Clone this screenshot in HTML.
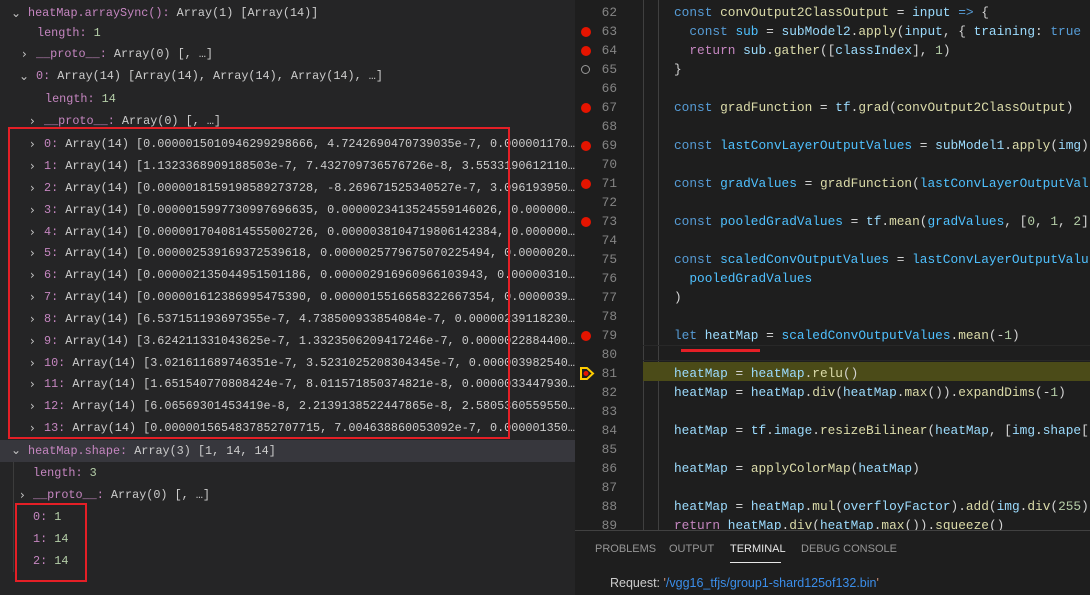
<!DOCTYPE html>
<html><head><meta charset="utf-8"><style>
*{margin:0;padding:0;box-sizing:border-box}
body{width:1090px;height:595px;overflow:hidden;background:#1e1e1e;font-family:"Liberation Mono",monospace;position:relative}
#left{position:absolute;left:0;top:0;width:575px;height:595px;background:#252526;font-size:11.8px;color:#cccccc;overflow:hidden}
.r{position:absolute;left:0;right:0;height:20px;line-height:20px;white-space:pre}
.r>span:last-child{right:0;overflow:hidden;text-overflow:ellipsis}
.k{color:#c586c0}.n{color:#b5cea8}
.ch{position:absolute;top:0;color:#c5c5c5;font-family:"DejaVu Sans",sans-serif;font-size:12px}
.box{position:absolute;border:2px solid #e51f26}
#ed{position:absolute;left:575px;top:0;width:515px;height:530px;background:#1e1e1e;font-size:12.8px;overflow:hidden}
.l{position:absolute;left:0;right:0;height:19px;line-height:19px;white-space:pre}
.ln{position:absolute;right:474px;color:#858585;text-align:right}
.bp{position:absolute;left:6px;top:5px;width:10px;height:10px;border-radius:50%;background:#e51400}
.c{position:absolute;left:99px;color:#d4d4d4}
.kw{color:#569cd6}.v{color:#9cdcfe}.f{color:#dcdcaa}.cv{color:#4fc1ff}.rt{color:#c586c0}.nu{color:#b5cea8}
#panel{position:absolute;left:575px;top:530px;width:515px;height:65px;background:#1e1e1e;border-top:1px solid #414141;font-family:"Liberation Sans",sans-serif;font-size:11px}
</style></head><body>
<div id="left">
<div class="r" style="top:3px"><span class="ch" style="left:11px">⌄</span><span style="position:absolute;left:28px"><span class="k">heatMap.arraySync():</span> Array(1) [Array(14)]</span></div>
<div class="r" style="top:23px"><span style="position:absolute;left:37px"><span class="k">length:</span> <span class="n">1</span></span></div>
<div class="r" style="top:44px"><span class="ch" style="left:22px">›</span><span style="position:absolute;left:36px"><span class="k">__proto__:</span> Array(0) [, …]</span></div>
<div class="r" style="top:66px"><span class="ch" style="left:19px">⌄</span><span style="position:absolute;left:36px"><span class="k">0:</span> Array(14) [Array(14), Array(14), Array(14), …]</span></div>
<div class="r" style="top:89px"><span style="position:absolute;left:45px"><span class="k">length:</span> <span class="n">14</span></span></div>
<div class="r" style="top:111px"><span class="ch" style="left:30px">›</span><span style="position:absolute;left:44px"><span class="k">__proto__:</span> Array(0) [, …]</span></div>
<div class="r" style="top:134px"><span class="ch" style="left:30px">›</span><span style="position:absolute;left:44px"><span class="k">0:</span> Array(14) [0.0000015010946299298666, 4.7242690470739035e-7, 0.0000011700000000000</span></div>
<div class="r" style="top:156px"><span class="ch" style="left:30px">›</span><span style="position:absolute;left:44px"><span class="k">1:</span> Array(14) [1.1323368909188503e-7, 7.432709736576726e-8, 3.5533190612110000000</span></div>
<div class="r" style="top:178px"><span class="ch" style="left:30px">›</span><span style="position:absolute;left:44px"><span class="k">2:</span> Array(14) [0.0000018159198589273728, -8.269671525340527e-7, 3.0961939500000000</span></div>
<div class="r" style="top:200px"><span class="ch" style="left:30px">›</span><span style="position:absolute;left:44px"><span class="k">3:</span> Array(14) [0.0000015997730997696635, 0.0000023413524559146026, 0.000000000000000</span></div>
<div class="r" style="top:222px"><span class="ch" style="left:30px">›</span><span style="position:absolute;left:44px"><span class="k">4:</span> Array(14) [0.0000017040814555002726, 0.0000038104719806142384, 0.000000000000000</span></div>
<div class="r" style="top:243px"><span class="ch" style="left:30px">›</span><span style="position:absolute;left:44px"><span class="k">5:</span> Array(14) [0.000002539169372539618, 0.0000025779675070225494, 0.0000020000000000</span></div>
<div class="r" style="top:265px"><span class="ch" style="left:30px">›</span><span style="position:absolute;left:44px"><span class="k">6:</span> Array(14) [0.000002135044951501186, 0.000002916960966103943, 0.0000031000000000</span></div>
<div class="r" style="top:287px"><span class="ch" style="left:30px">›</span><span style="position:absolute;left:44px"><span class="k">7:</span> Array(14) [0.000001612386995475390, 0.0000015516658322667354, 0.0000039000000000</span></div>
<div class="r" style="top:309px"><span class="ch" style="left:30px">›</span><span style="position:absolute;left:44px"><span class="k">8:</span> Array(14) [6.537151193697355e-7, 4.738500933854084e-7, 0.0000023911823000000</span></div>
<div class="r" style="top:331px"><span class="ch" style="left:30px">›</span><span style="position:absolute;left:44px"><span class="k">9:</span> Array(14) [3.624211331043625e-7, 1.3323506209417246e-7, 0.0000022884400000000</span></div>
<div class="r" style="top:353px"><span class="ch" style="left:30px">›</span><span style="position:absolute;left:44px"><span class="k">10:</span> Array(14) [3.021611689746351e-7, 3.5231025208304345e-7, 0.000003982540000000</span></div>
<div class="r" style="top:374px"><span class="ch" style="left:30px">›</span><span style="position:absolute;left:44px"><span class="k">11:</span> Array(14) [1.651540770808424e-7, 8.011571850374821e-8, 0.000003344793000000</span></div>
<div class="r" style="top:396px"><span class="ch" style="left:30px">›</span><span style="position:absolute;left:44px"><span class="k">12:</span> Array(14) [6.06569301453419e-8, 2.2139138522447865e-8, 2.5805360559550000000</span></div>
<div class="r" style="top:418px"><span class="ch" style="left:30px">›</span><span style="position:absolute;left:44px"><span class="k">13:</span> Array(14) [0.0000015654837852707715, 7.004638860053092e-7, 0.00000135000000000</span></div>
<div class="r" style="top:440px;height:22px;background:#37373d"><span class="ch" style="left:11px">⌄</span><span style="position:absolute;left:28px;top:1px"><span class="k">heatMap.shape:</span> Array(3) [1, 14, 14]</span></div>
<div class="r" style="top:463px"><span style="position:absolute;left:33px"><span class="k">length:</span> <span class="n">3</span></span></div>
<div class="r" style="top:485px"><span class="ch" style="left:20px">›</span><span style="position:absolute;left:33px"><span class="k">__proto__:</span> Array(0) [, …]</span></div>
<div class="r" style="top:507px"><span style="position:absolute;left:33px"><span class="k">0:</span> <span class="n">1</span></span></div>
<div class="r" style="top:529px"><span style="position:absolute;left:33px"><span class="k">1:</span> <span class="n">14</span></span></div>
<div class="r" style="top:551px"><span style="position:absolute;left:33px"><span class="k">2:</span> <span class="n">14</span></span></div>
<div style="position:absolute;left:13px;top:462px;width:1px;height:110px;background:#3c3c3c"></div>
<div class="box" style="left:8px;top:127px;width:502px;height:312px"></div>
<div class="box" style="left:15px;top:503px;width:72px;height:79px"></div>
</div>

<div id="ed">
<div style="position:absolute;left:68px;top:0;width:1px;height:530px;background:#404040"></div>
<div style="position:absolute;left:83px;top:0;width:1px;height:530px;background:#404040"></div>
<div style="position:absolute;left:68px;top:345px;right:0;height:16px;border-top:1px solid #282828;border-bottom:1px solid #282828"></div>
<div style="position:absolute;left:68px;top:362px;right:0;height:19px;background:#4b4b18"></div>
<div style="position:absolute;left:106px;top:349px;width:79px;height:3px;background:#e51f26"></div>
<div class="l" style="top:3px"><span class="ln" style="left:0;width:42px">62</span><span class="c"><span class="kw">const</span> <span class="f">convOutput2ClassOutput</span> = <span class="v">input</span> <span class="kw">=&gt;</span> {</span></div>
<div class="l" style="top:22px"><span class="bp"></span><span class="ln" style="left:0;width:42px">63</span><span class="c">  <span class="kw">const</span> <span class="cv">sub</span> = <span class="v">subModel2</span>.<span class="f">apply</span>(<span class="v">input</span>, { <span class="v">training</span>: <span class="kw">true</span></span></div>
<div class="l" style="top:41px"><span class="bp"></span><span class="ln" style="left:0;width:42px">64</span><span class="c">  <span class="rt">return</span> <span class="v">sub</span>.<span class="f">gather</span>([<span class="v">classIndex</span>], <span class="nu">1</span>)</span></div>
<div class="l" style="top:60px"><span class="bp" style="background:none;border:1.5px solid #999;width:9px;height:9px"></span><span class="ln" style="left:0;width:42px">65</span><span class="c">}</span></div>
<div class="l" style="top:79px"><span class="ln" style="left:0;width:42px">66</span></div>
<div class="l" style="top:98px"><span class="bp"></span><span class="ln" style="left:0;width:42px">67</span><span class="c"><span class="kw">const</span> <span class="f">gradFunction</span> = <span class="v">tf</span>.<span class="f">grad</span>(<span class="f">convOutput2ClassOutput</span>)</span></div>
<div class="l" style="top:117px"><span class="ln" style="left:0;width:42px">68</span></div>
<div class="l" style="top:136px"><span class="bp"></span><span class="ln" style="left:0;width:42px">69</span><span class="c"><span class="kw">const</span> <span class="cv">lastConvLayerOutputValues</span> = <span class="v">subModel1</span>.<span class="f">apply</span>(<span class="v">img</span>)</span></div>
<div class="l" style="top:155px"><span class="ln" style="left:0;width:42px">70</span></div>
<div class="l" style="top:174px"><span class="bp"></span><span class="ln" style="left:0;width:42px">71</span><span class="c"><span class="kw">const</span> <span class="cv">gradValues</span> = <span class="f">gradFunction</span>(<span class="cv">lastConvLayerOutputVal</span></span></div>
<div class="l" style="top:193px"><span class="ln" style="left:0;width:42px">72</span></div>
<div class="l" style="top:212px"><span class="bp"></span><span class="ln" style="left:0;width:42px">73</span><span class="c"><span class="kw">const</span> <span class="cv">pooledGradValues</span> = <span class="v">tf</span>.<span class="f">mean</span>(<span class="cv">gradValues</span>, [<span class="nu">0</span>, <span class="nu">1</span>, <span class="nu">2</span>]</span></div>
<div class="l" style="top:231px"><span class="ln" style="left:0;width:42px">74</span></div>
<div class="l" style="top:250px"><span class="ln" style="left:0;width:42px">75</span><span class="c"><span class="kw">const</span> <span class="cv">scaledConvOutputValues</span> = <span class="cv">lastConvLayerOutputValu</span></span></div>
<div class="l" style="top:269px"><span class="ln" style="left:0;width:42px">76</span><span class="c">  <span class="cv">pooledGradValues</span></span></div>
<div class="l" style="top:288px"><span class="ln" style="left:0;width:42px">77</span><span class="c">)</span></div>
<div class="l" style="top:307px"><span class="ln" style="left:0;width:42px">78</span></div>
<div class="l" style="top:326px"><span class="bp"></span><span class="ln" style="left:0;width:42px">79</span><span class="c"><span class="kw">let</span> <span class="v">heatMap</span> = <span class="cv">scaledConvOutputValues</span>.<span class="f">mean</span>(-<span class="nu">1</span>)</span></div>
<div class="l" style="top:345px"><span class="ln" style="left:0;width:42px">80</span></div>
<div class="l" style="top:364px"><svg style="position:absolute;left:4px;top:2px" width="16" height="15" viewBox="0 0 16 15"><path d="M2 2h6l6 5.5-6 5.5H2z" fill="none" stroke="#ffcc00" stroke-width="2"/><circle cx="7" cy="7.5" r="2.5" fill="#e51400"/></svg><span class="ln" style="left:0;width:42px">81</span><span class="c"><span class="v">heatMap</span> = <span class="v">heatMap</span>.<span class="f">relu</span>()</span></div>
<div class="l" style="top:383px"><span class="ln" style="left:0;width:42px">82</span><span class="c"><span class="v">heatMap</span> = <span class="v">heatMap</span>.<span class="f">div</span>(<span class="v">heatMap</span>.<span class="f">max</span>()).<span class="f">expandDims</span>(-<span class="nu">1</span>)</span></div>
<div class="l" style="top:402px"><span class="ln" style="left:0;width:42px">83</span></div>
<div class="l" style="top:421px"><span class="ln" style="left:0;width:42px">84</span><span class="c"><span class="v">heatMap</span> = <span class="v">tf</span>.<span class="v">image</span>.<span class="f">resizeBilinear</span>(<span class="v">heatMap</span>, [<span class="v">img</span>.<span class="v">shape</span>[</span></div>
<div class="l" style="top:440px"><span class="ln" style="left:0;width:42px">85</span></div>
<div class="l" style="top:459px"><span class="ln" style="left:0;width:42px">86</span><span class="c"><span class="v">heatMap</span> = <span class="f">applyColorMap</span>(<span class="v">heatMap</span>)</span></div>
<div class="l" style="top:478px"><span class="ln" style="left:0;width:42px">87</span></div>
<div class="l" style="top:497px"><span class="ln" style="left:0;width:42px">88</span><span class="c"><span class="v">heatMap</span> = <span class="v">heatMap</span>.<span class="f">mul</span>(<span class="v">overfloyFactor</span>).<span class="f">add</span>(<span class="v">img</span>.<span class="f">div</span>(<span class="nu">255</span>)</span></div>
<div class="l" style="top:516px"><span class="ln" style="left:0;width:42px">89</span><span class="c"><span class="rt">return</span> <span class="v">heatMap</span>.<span class="f">div</span>(<span class="v">heatMap</span>.<span class="f">max</span>()).<span class="f">squeeze</span>()</span></div>
</div>

<div id="panel">
<span style="position:absolute;left:20px;top:12px;color:#969696">PROBLEMS</span>
<span style="position:absolute;left:94px;top:12px;color:#969696">OUTPUT</span>
<span style="position:absolute;left:155px;top:12px;color:#e7e7e7">TERMINAL</span>
<div style="position:absolute;left:155px;top:31px;width:51px;height:1px;background:#e7e7e7"></div>
<span style="position:absolute;left:226px;top:12px;color:#969696">DEBUG CONSOLE</span>
<span style="position:absolute;left:35px;top:45px;font-family:'Liberation Sans',sans-serif;font-size:12.5px;color:#cccccc">Request: <span style="color:#ce9178">'</span><span style="color:#3b8eea">/vgg16_tfjs/group1-shard125of132.bin</span><span style="color:#ce9178">'</span></span>
</div>
</body></html>
